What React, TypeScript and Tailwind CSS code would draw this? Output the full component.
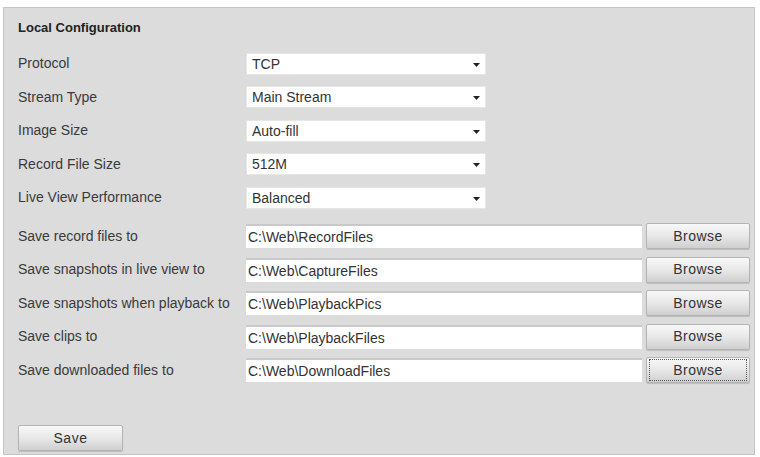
import React from "react";

const font = { fontFamily: '"Liberation Sans", Arial, sans-serif' };

function Arrow() {
  return (
    <svg width="7" height="4" viewBox="0 0 7 4" className="absolute right-[5px] top-[9px]">
      <path d="M0 0 L7 0 L3.5 4 Z" fill="#222" />
    </svg>
  );
}

function SelectRow({ label, value }: { label: string; value: string }) {
  return (
    <div className="flex h-[33.5px] items-center">
      <div className="w-[228px] shrink-0 text-[14px] text-[#3a3a3a]">{label}</div>
      <div className="relative h-[22px] w-[240px] border border-[#e6e6e6] bg-white pl-[5px] text-[14px] leading-[20px] text-[#333]">
        {value}
        <Arrow />
      </div>
    </div>
  );
}

function Btn({ children, w, focus }: { children: React.ReactNode; w: string; focus?: boolean }) {
  return (
    <div
      className={`flex h-[26px] items-center justify-center rounded-[2px] border border-[#b4b4b4] bg-gradient-to-b from-[#f8f8f8] via-[#e8e8e8] to-[#cfcfcf] text-[14px] tracking-[0.5px] text-[#333] shadow-[0_1px_1px_rgba(0,0,0,0.15)] ${w}`}
    >
      {focus ? (
        <div className="flex h-[22px] w-[calc(100%-4px)] items-center justify-center border border-dotted border-[#555]">{children}</div>
      ) : (
        children
      )}
    </div>
  );
}

function PathRow({ label, value, focus }: { label: string; value: string; focus?: boolean }) {
  return (
    <div className="flex h-[33.5px] items-center">
      <div className="w-[228px] shrink-0 text-[14px] text-[#3a3a3a]">{label}</div>
      <div className="h-[24px] w-[396px] border-t-2 border-[#c9c9c9] bg-white pl-[2px] text-[14px] leading-[22px] text-[#333]">{value}</div>
      <div className="ml-[4px]">
        <Btn w="w-[104px]" focus={focus}>Browse</Btn>
      </div>
    </div>
  );
}

export default function App() {
  return (
    <div className="h-[457px] w-[760px] bg-white pl-[3px] pt-[7px]" style={font}>
      <div className="h-[448px] w-[752px] border border-[#c4c4c4] bg-[#dcdcdc] pl-[14px]">
        <div className="pt-[12px] text-[13px] font-bold leading-[15px] text-[#222]">Local Configuration</div>
        <div className="mt-[12px]">
          <SelectRow label="Protocol" value="TCP" />
          <SelectRow label="Stream Type" value="Main Stream" />
          <SelectRow label="Image Size" value="Auto-fill" />
          <SelectRow label="Record File Size" value="512M" />
          <SelectRow label="Live View Performance" value="Balanced" />
        </div>
        <div className="mt-[5px]">
          <PathRow label="Save record files to" value="C:\Web\RecordFiles" />
          <PathRow label="Save snapshots in live view to" value="C:\Web\CaptureFiles" />
          <PathRow label="Save snapshots when playback to" value="C:\Web\PlaybackPics" />
          <PathRow label="Save clips to" value="C:\Web\PlaybackFiles" />
          <PathRow label="Save downloaded files to" value="C:\Web\DownloadFiles" focus />
        </div>
        <div className="mt-[38px]">
          <Btn w="w-[105px] h-[25px]">Save</Btn>
        </div>
      </div>
    </div>
  );
}
